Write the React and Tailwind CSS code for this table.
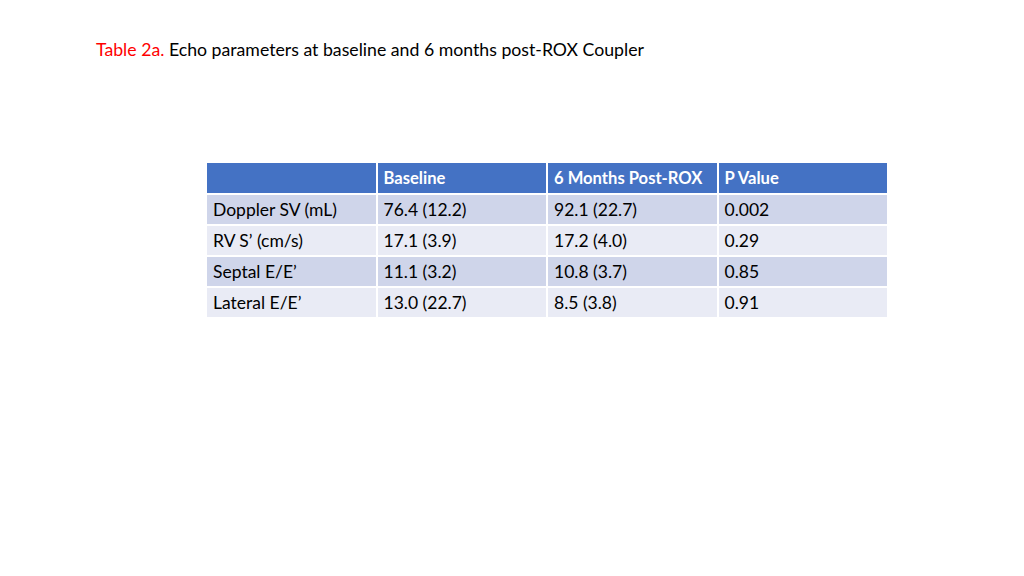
import React from 'react';

const rows = [
  ['Doppler SV (mL)', '76.4 (12.2)', '92.1 (22.7)', '0.002'],
  ['RV S’ (cm/s)', '17.1 (3.9)', '17.2 (4.0)', '0.29'],
  ['Septal E/E’', '11.1 (3.2)', '10.8 (3.7)', '0.85'],
  ['Lateral E/E’', '13.0 (22.7)', '8.5 (3.8)', '0.91'],
];

const App = () => {
  return (
    <div className="w-[1024px] h-[576px] bg-white font-['Lato',sans-serif] text-black">
      {/* Title */}
      <div className="pt-[37px] pl-[96px] text-[17.7px] leading-[26px]">
        <span className="text-[#ff0000]">Table 2a.</span> Echo parameters at baseline and 6 months post-ROX Coupler
      </div>

      {/* Table */}
      <div className="pl-[205px] pt-[98px]">
        <table className="w-[684px] table-fixed border-collapse text-[17.5px] leading-[20px]">
          <thead>
            <tr className="bg-[#4472c4] text-white text-[16.6px]">
              <th className="h-[32px] border-2 border-white"></th>
              <th className="h-[32px] border-2 border-white px-[6px] text-left font-bold whitespace-nowrap">Baseline</th>
              <th className="h-[32px] border-2 border-white px-[6px] text-left font-bold whitespace-nowrap">6 Months Post-ROX</th>
              <th className="h-[32px] border-2 border-white px-[6px] text-left font-bold whitespace-nowrap">P Value</th>
            </tr>
          </thead>
          <tbody>
            {rows.map((row, i) => (
              <tr key={i} className={i % 2 === 0 ? 'bg-[#cfd5ea]' : 'bg-[#e9ebf5]'}>
                {row.map((cell, j) => (
                  <td key={j} className="h-[31px] border-2 border-white px-[6px] whitespace-nowrap">
                    {cell}
                  </td>
                ))}
              </tr>
            ))}
          </tbody>
        </table>
      </div>
    </div>
  );
};

export default App;
